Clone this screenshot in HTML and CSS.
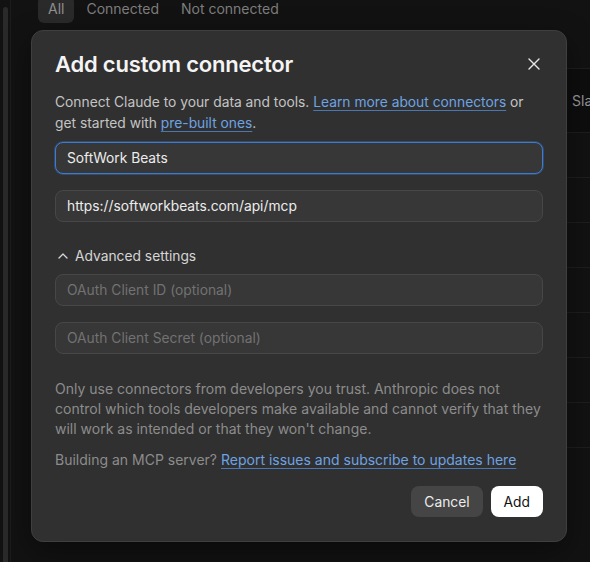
FILE: index.html
```html
<!DOCTYPE html>
<html lang="en">
<head>
    <meta charset="UTF-8">
    <meta name="viewport" content="width=device-width, initial-scale=1.0">
    <title>Add custom connector</title>
    <link rel="stylesheet" href="styles.css">
</head>
<body>
    <!-- Page behind the dialog -->
    <div class="page">
        <div class="rail"><div class="rail-bar"></div></div>
        <div class="main">
            <div class="tabs">
                <span class="tab active">All</span>
                <span class="tab">Connected</span>
                <span class="tab">Not connected</span>
            </div>
            <div class="table">
                <div class="row head"></div>
                <div class="row first"><span>Slack</span></div>
                <div class="row"></div>
                <div class="row"></div>
                <div class="row"></div>
                <div class="row"></div>
                <div class="row"></div>
                <div class="row"></div>
                <div class="row"></div>
            </div>
        </div>
    </div>

    <!-- Dialog -->
    <div class="overlay">
        <div class="dialog">
            <div class="dialog-head">
                <h2>Add custom connector</h2>
                <button class="close" aria-label="Close">
                    <svg width="14" height="14" viewBox="0 0 14 14"><path d="M2 2L12 12M12 2L2 12" stroke="#e8e8e8" stroke-width="1.4" stroke-linecap="round"/></svg>
                </button>
            </div>
            <p class="intro">Connect Claude to your data and tools. <a href="#">Learn more about connectors</a> or get started with <a href="#">pre-built ones</a>.</p>

            <div class="field focus">SoftWork Beats</div>
            <div class="field">https://softworkbeats.com/api/mcp</div>

            <div class="advanced">
                <svg width="12" height="12" viewBox="0 0 12 12"><path d="M2 8L6 4L10 8" fill="none" stroke="#d6d6d6" stroke-width="1.3" stroke-linecap="round" stroke-linejoin="round"/></svg>
                <span>Advanced settings</span>
            </div>

            <div class="field placeholder">OAuth Client ID (optional)</div>
            <div class="field placeholder">OAuth Client Secret (optional)</div>

            <p class="note first">Only use connectors from developers you trust. Anthropic does not control which tools developers make available and cannot verify that they will work as intended or that they won't change.</p>
            <p class="note">Building an MCP server? <a href="#">Report issues and subscribe to updates here</a></p>

            <div class="actions">
                <button class="btn cancel">Cancel</button>
                <button class="btn add">Add</button>
            </div>
        </div>
    </div>
</body>
</html>
```
FILE: styles.css
```css
body {
    margin: 0;
    background: #121212;
    font-family: 'Inter', 'Noto Sans', sans-serif;
    color: #e8e8e8;
    overflow: hidden;
    height: 562px;
}

/* Фон страницы */
.page {
    display: flex;
    height: 100%;
}

.rail {
    width: 11px;
    border-right: 1px solid #1c1c1c;
    padding: 7px 0 0 3px;
    box-sizing: border-box;
}

.rail-bar {
    width: 5px;
    height: 100%;
    background: #2a2a2a;
    border-radius: 3px 3px 0 0;
}

.main {
    flex: 1;
    padding-left: 27px;
}

.tabs {
    display: flex;
    gap: 2px;
    margin-top: -4px;
    font-size: 14px;
}

.tab {
    padding: 4px 10px 6px;
    color: #7d7d7d;
    border-radius: 6px;
}

.tab.active {
    background: #2a2a2a;
    color: #8f8f8f;
}

.table {
    margin-top: 45px;
}

.row {
    height: 44px;
    border-bottom: 1px solid #1e1e1e;
}

.row.head {
    height: 0;
}

.row.first {
    height: 63px;
    background: #0e0e0e;
    display: flex;
    align-items: center;
    justify-content: flex-end;
    font-size: 14px;
    color: #9a9a9a;
    overflow: hidden;
}

.row.first span {
    margin-right: -18px;
}

/* Диалог */
.overlay {
    position: absolute;
    top: 30px;
    left: 31px;
}

.dialog {
    width: 488px;
    padding: 20px 23px 24px;
    background: #303030;
    border: 1px solid #3f3f3f;
    border-radius: 12px;
    box-shadow: 0 10px 30px rgba(0, 0, 0, 0.4);
}

.dialog-head {
    display: flex;
    align-items: center;
    justify-content: space-between;
}

.dialog-head h2 {
    margin: 0;
    font-size: 22px;
    font-weight: 600;
    color: #f4f4f4;
    letter-spacing: -0.2px;
}

.close {
    background: none;
    border: none;
    padding: 0;
    margin-right: 2px;
    display: flex;
    cursor: pointer;
}

.intro {
    margin: 15px 0 8px;
    font-size: 13.8px;
    line-height: 21px;
    color: #c4c4c4;
}

a {
    color: #6ea3e3;
    text-decoration: underline;
    text-decoration-color: #4b77b0;
    text-underline-offset: 3px;
}

.field {
    height: 30px;
    line-height: 30px;
    padding: 0 11px;
    margin-bottom: 16px;
    background: #373737;
    border: 1px solid #474747;
    border-radius: 8px;
    font-size: 13.8px;
    color: #ececec;
}

.field.focus {
    border-color: #3c7bd4;
    box-shadow: 0 0 0 1px rgba(60, 123, 212, 0.35);
}

.field.placeholder {
    color: #727272;
}

.advanced {
    display: flex;
    align-items: center;
    gap: 6px;
    margin: 26px 0 10px 2px;
    font-size: 13.8px;
    color: #d6d6d6;
}

.note {
    margin: 0 0 11px;
    font-size: 14px;
    line-height: 20px;
    color: #8c8c8c;
}

.note.first {
    margin-top: 25px;
}

.actions {
    display: flex;
    justify-content: flex-end;
    gap: 8px;
    margin-top: 16px;
}

.btn {
    height: 31px;
    padding: 0 13px;
    border: none;
    border-radius: 8px;
    font-family: inherit;
    font-size: 13.8px;
    cursor: pointer;
}

.btn.cancel {
    background: #454545;
    color: #ececec;
}

.btn.add {
    background: #ffffff;
    color: #111;
}
```
